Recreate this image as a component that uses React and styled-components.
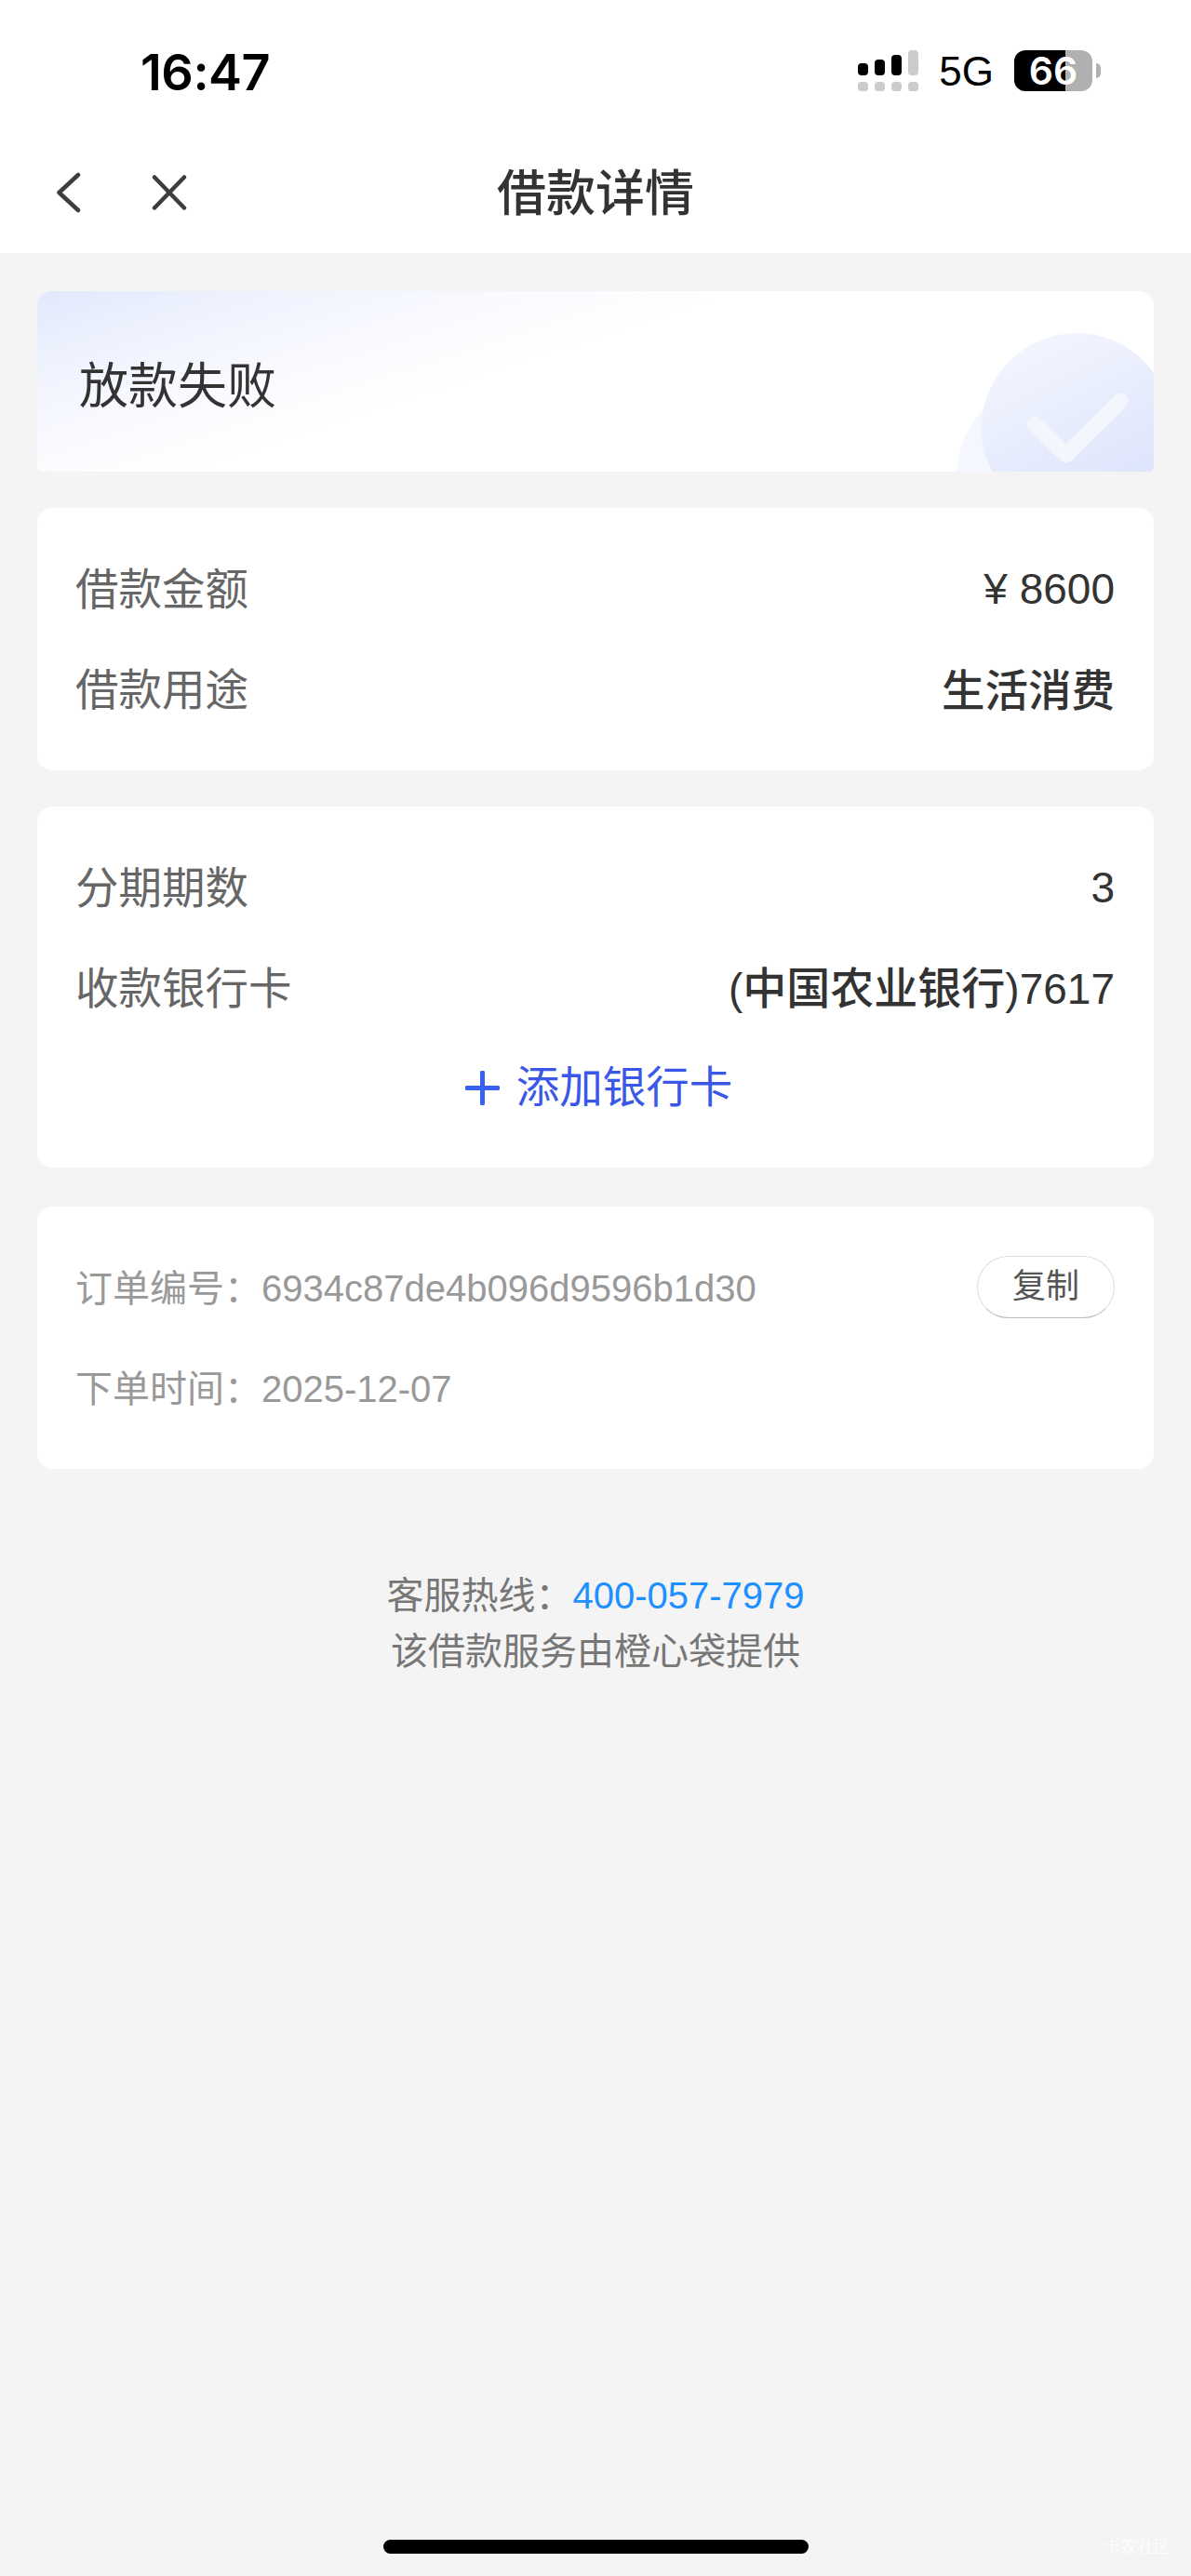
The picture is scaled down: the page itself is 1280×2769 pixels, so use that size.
import React from 'react';
import styled, { createGlobalStyle } from 'styled-components';

const GlobalStyle = createGlobalStyle`
  html, body {
    margin: 0;
    padding: 0;
    background: #f4f4f4;
  }
  * {
    box-sizing: border-box;
  }
`;

function SignalIcon() {
  return (
    <svg width="65" height="44" viewBox="0 0 65 44">
      <rect x="0" y="14" width="11" height="13" rx="4" fill="#000" />
      <rect x="18" y="10" width="11" height="17" rx="4" fill="#000" />
      <rect x="36" y="5" width="11" height="22" rx="4" fill="#000" />
      <rect x="54" y="0" width="11" height="27" rx="4" fill="#ccc" />
      <rect x="0" y="34" width="11" height="10" rx="3.5" fill="#ccc" />
      <rect x="18" y="34" width="11" height="10" rx="3.5" fill="#ccc" />
      <rect x="36" y="34" width="11" height="10" rx="3.5" fill="#ccc" />
      <rect x="54" y="34" width="11" height="10" rx="3.5" fill="#ccc" />
    </svg>
  );
}

function BackIcon() {
  return (
    <svg width="26" height="44" viewBox="0 0 26 44">
      <path d="M23 3 L2.500 22 L23 41" fill="none" stroke="#3d3d3d" strokeWidth="4.500" strokeLinecap="round" strokeLinejoin="round" />
    </svg>
  );
}

function CloseIcon() {
  return (
    <svg width="38" height="38" viewBox="0 0 38 38">
      <path d="M3 2.500 L35 35.500 M35 2.500 L3 35.500" fill="none" stroke="#3d3d3d" strokeWidth="4.500" strokeLinecap="round" />
    </svg>
  );
}

function BadgeArt() {
  return (
    <BadgeSvg width="240" height="194" viewBox="0 0 240 194">
      <defs>
        <linearGradient id="badgeFill" x1="0.25" y1="0" x2="0.75" y2="1">
          <stop offset="0" stopColor="#f4f6fe" />
          <stop offset="1" stopColor="#d9e2fc" />
        </linearGradient>
      </defs>
      <circle cx="132" cy="199" r="104" fill="#f5f7fe" />
      <circle cx="157" cy="147" r="102" fill="url(#badgeFill)" />
      <path d="M112 143 L146 176 L204 118" fill="none" stroke="#f4f6fe" strokeWidth="17" strokeLinecap="round" strokeLinejoin="round" />
    </BadgeSvg>
  );
}

function App() {
  return (
    <Page>
      <GlobalStyle />
      <Header>
        <StatusBar>
          <Clock>16:47</Clock>
          <StatusRight>
            <SignalIcon />
            <Network>5G</Network>
            <Battery>
              <BatteryBody>66</BatteryBody>
              <BatteryNub />
            </Battery>
          </StatusRight>
        </StatusBar>
        <NavBar>
          <NavIcons>
            <BackIcon />
            <CloseIcon />
          </NavIcons>
          <Title>借款详情</Title>
        </NavBar>
      </Header>

      <Banner>
        <BannerText>放款失败</BannerText>
        <BadgeArt />
      </Banner>

      <Card $top={39}>
        <Row>
          <Label>借款金额</Label>
          <Value>¥ 8600</Value>
        </Row>
        <Row>
          <Label>借款用途</Label>
          <StrongValue>生活消费</StrongValue>
        </Row>
      </Card>

      <Card $top={39}>
        <Row>
          <Label>分期期数</Label>
          <Value>3</Value>
        </Row>
        <Row>
          <Label>收款银行卡</Label>
          <BankValue>(<BankName>中国农业银行</BankName>)7617</BankValue>
        </Row>
        <AddCard>
          <svg width="37" height="37" viewBox="0 0 37 37">
            <path d="M18.500 2 V35 M2 18.500 H35" fill="none" stroke="#3860f5" strokeWidth="5" strokeLinecap="round" />
          </svg>
          <AddText>添加银行卡</AddText>
        </AddCard>
      </Card>

      <Card $top={42}>
        <Row>
          <OrderText>订单编号：6934c87de4b096d9596b1d30</OrderText>
          <CopyButton type="button">复制</CopyButton>
        </Row>
        <Row>
          <OrderText>下单时间：2025-12-07</OrderText>
        </Row>
      </Card>

      <Footer>
        <div>客服热线：<Hotline>400-057-7979</Hotline></div>
        <div>该借款服务由橙心袋提供</div>
      </Footer>

      <HomeBar />
      <Watermark>卡农社区</Watermark>
    </Page>
  );
}

const FONT = '"Liberation Sans", "Noto Sans CJK SC", sans-serif';

const Page = styled.div`
  position: relative;
  display: flex;
  flex-direction: column;
  width: 1280px;
  height: 2769px;
  overflow: hidden;
  background: #f4f4f4;
  font-family: ${FONT};
`;

const Header = styled.header`
  background: #fff;
  height: 272px;
`;

const StatusBar = styled.div`
  display: flex;
  align-items: center;
  justify-content: space-between;
  height: 150px;
  padding: 4px 97px 0 151px;
`;

const Clock = styled.span`
  font-family: Inter, sans-serif;
  font-size: 54px;
  font-weight: 600;
  letter-spacing: -0.5px;
  color: #000;
`;

const StatusRight = styled.div`
  display: flex;
  align-items: center;
  padding-bottom: 3px;
`;

const Network = styled.span`
  margin-left: 22px;
  padding-top: 3px;
  font-size: 44px;
  color: #000;
`;

const Battery = styled.div`
  display: flex;
  align-items: center;
  margin-left: 22px;
`;

const BatteryBody = styled.div`
  display: flex;
  align-items: center;
  justify-content: center;
  width: 84px;
  height: 44px;
  border-radius: 12px;
  background: linear-gradient(90deg, #000 0 55px, #b0b0b0 55px);
  color: #fff;
  font-family: Inter, sans-serif;
  font-size: 41px;
  font-weight: 600;
`;

const BatteryNub = styled.div`
  width: 5px;
  height: 16px;
  margin-left: 4px;
  border-radius: 0 8px 8px 0;
  background: #b0b0b0;
`;

const NavBar = styled.nav`
  display: grid;
  grid-template-columns: 1fr auto 1fr;
  align-items: center;
  height: 114px;
`;

const NavIcons = styled.div`
  display: flex;
  align-items: center;
  gap: 76px;
  padding-left: 61px;
`;

const Title = styled.h1`
  margin: 0;
  padding-bottom: 6px;
  font-size: 53px;
  font-weight: 500;
  color: #333;
`;

const Banner = styled.section`
  position: relative;
  display: flex;
  align-items: center;
  height: 194px;
  margin: 41px 40px 0;
  padding: 2px 0 0 45px;
  overflow: hidden;
  border-radius: 16px 16px 6px 6px;
  background: linear-gradient(162deg, #e2e8fd 0%, #eef2fe 13%, #f8f9ff 26%, #fff 42%);
`;

const BannerText = styled.div`
  font-size: 53px;
  color: #333;
`;

const BadgeSvg = styled.svg`
  position: absolute;
  right: 0;
  bottom: 0;
`;

const Card = styled.section`
  margin: ${(p) => p.$top}px 40px 0;
  padding: 33px 42px 33px 41px;
  border-radius: 16px;
  background: #fff;
`;

const Row = styled.div`
  display: flex;
  align-items: center;
  justify-content: space-between;
  height: 108px;
`;

const Label = styled.span`
  padding-bottom: 8px;
  font-size: 46.500px;
  color: #666;
`;

const Value = styled.span`
  font-size: 46px;
  color: #333;
`;

const StrongValue = styled(Value)`
  padding-bottom: 6px;
  font-size: 46.500px;
  font-weight: 500;
`;

const BankValue = styled(Value)`
  padding-bottom: 8px;
`;

const BankName = styled.span`
  font-size: 47px;
  font-weight: 500;
`;

const AddCard = styled.div`
  display: flex;
  align-items: center;
  justify-content: center;
  gap: 18px;
  height: 106px;
  padding-left: 8px;
  color: #3a57e8;
`;

const AddText = styled.span`
  padding-bottom: 10px;
  font-size: 46.500px;
`;

const OrderText = styled.span`
  padding-bottom: 5px;
  font-size: 40px;
  color: #999;
`;

const CopyButton = styled.button`
  width: 148px;
  height: 67px;
  margin-top: -2px;
  padding: 0 0 8px;
  border: 1px solid #ddd;
  border-bottom-color: #bbb;
  border-radius: 34px;
  background: #fff;
  font-family: ${FONT};
  font-size: 36px;
  color: #555;
`;

const Footer = styled.footer`
  margin-top: 106px;
  font-size: 40px;
  line-height: 60px;
  text-align: center;
  color: #777;
`;

const Hotline = styled.span`
  color: #1e90ff;
`;

const HomeBar = styled.div`
  width: 457px;
  height: 15px;
  margin: auto auto 24px;
  border-radius: 8px;
  background: #000;
`;

const Watermark = styled.div`
  position: absolute;
  right: 22px;
  bottom: 20px;
  font-size: 18px;
  color: rgba(255, 255, 255, 0.75);
`;

export default App;
